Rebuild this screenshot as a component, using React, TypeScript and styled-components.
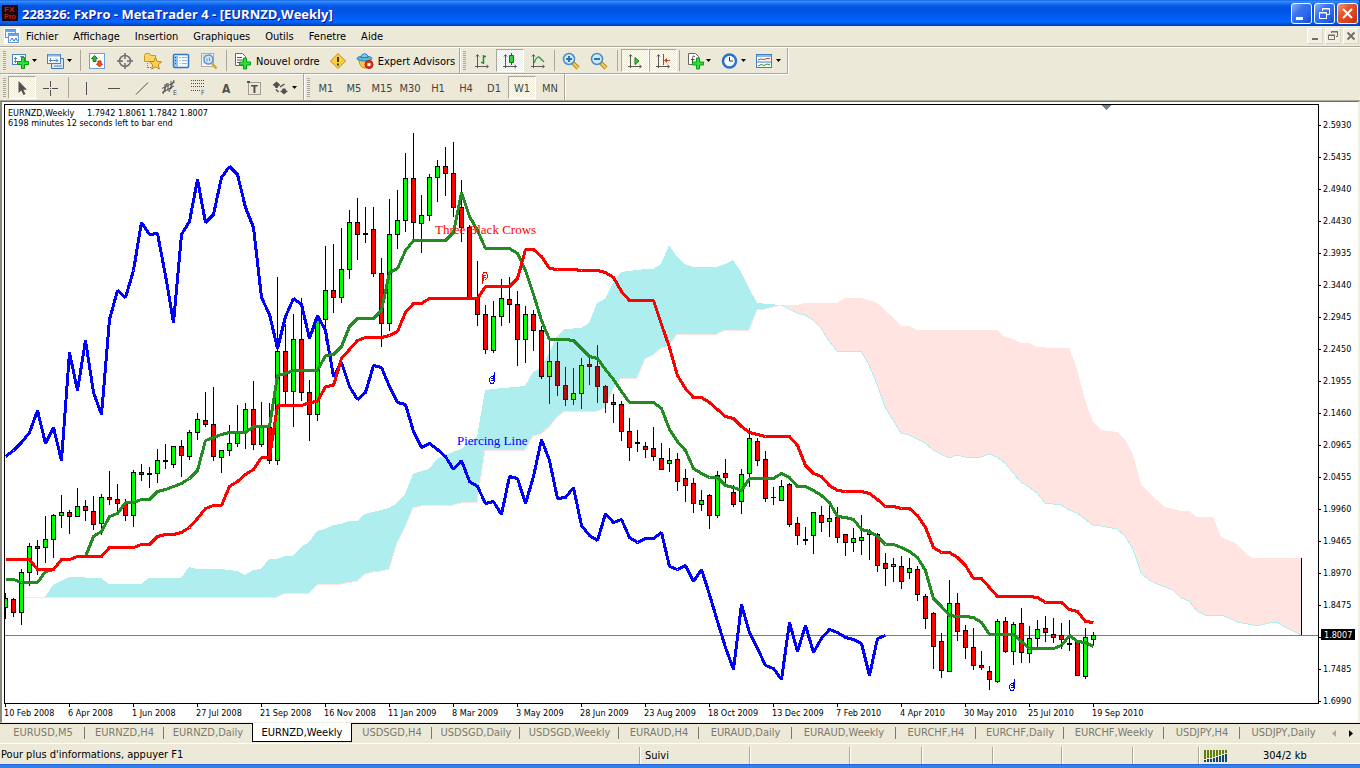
import React from "react";
import styled, { createGlobalStyle } from "styled-components";

const UI_FONT = '"DejaVu Sans Condensed", "Liberation Sans", Tahoma, sans-serif';

const GlobalStyle = createGlobalStyle`
  * { box-sizing: border-box; }
  body { margin: 0; background: #ece9d8; font-family: ${UI_FONT}; font-size: 11px; color: #000; }
  button, a { font-family: inherit; font-size: inherit; color: inherit; }
`;

const Window = styled.div`
  display: flex;
  flex-direction: column;
  min-height: 100vh;
  background: #ece9d8;
  overflow: hidden;
`;

/* ---------- title bar ---------- */

const TitleBar = styled.header`
  display: flex;
  align-items: center;
  height: 26px;
  padding: 0 1px 0 2px;
  background: linear-gradient(#0a50d8 0, #3a94ff 1px, #1f78f5 3px, #0557e5 6px, #0054e3 12px, #0360fb 19px, #0366ff 22px, #0150d8 24px, #003dab 26px);
  border-right: 1px solid #0831d9;
`;

const Title = styled.h1`
  flex: 1;
  margin: 0 0 0 4px;
  padding-top: 1px;
  font-family: "Open Sans", "Trebuchet MS", sans-serif;
  font-size: 13px;
  line-height: 20px;
  font-weight: bold;
  color: #fff;
  text-shadow: 1px 1px 0 #0f1089;
  white-space: nowrap;
`;

const CaptionButtons = styled.div`
  display: flex;
  gap: 2px;
`;

const CaptionButton = styled.button<{ $danger?: boolean }>`
  width: 21px;
  height: 21px;
  padding: 0;
  border: 1px solid #fff;
  border-radius: 3px;
  background: ${(p) =>
    p.$danger
      ? "linear-gradient(135deg, #f0a088 0, #e2552f 35%, #d8431c 70%, #b83210 100%)"
      : "linear-gradient(135deg, #90b0f8 0, #3c74f0 35%, #2460ea 75%, #1848c0 100%)"};
  svg { display: block; }
`;

/* ---------- menu ---------- */

const MenuBar = styled.nav`
  display: flex;
  align-items: center;
  height: 21px;
  padding: 0 1px 0 4px;
  border-bottom: 1px solid #aca899;
`;

const MenuItems = styled.div`
  display: flex;
  flex: 1;
  gap: 15px;
  margin-left: 6px;
  padding-top: 2px;
`;

const MenuItem = styled.button`
  padding: 0;
  border: 0;
  background: none;
  line-height: 16px;
`;

const MdiButton = styled.button`
  width: 16px;
  height: 16px;
  margin-left: 2px;
  padding: 0;
  border: 1px solid;
  border-color: #fff #d8d5c4 #d8d5c4 #fff;
  background: #f1efe4;
  svg { display: block; }
`;

/* ---------- toolbars ---------- */

const ToolRow = styled.div<{ $first?: boolean }>`
  display: flex;
  height: 27px;
  border-top: ${(p) => (p.$first ? "1px solid #fff" : "0")};
`;

const ToolGroup = styled.div<{ $last?: boolean }>`
  display: flex;
  align-items: center;
  padding-left: 3px;
  border-right: 1px solid #aca899;
  border-bottom: ${(p) => (p.$last ? "0" : "1px solid #aca899")};
  box-shadow: 1px 1px 0 #fff;
`;

const Grip = styled.span`
  width: 3px;
  height: 20px;
  margin-right: 2px;
  background: repeating-linear-gradient(#aca899 0 1px, #ece9d8 1px 2px);
`;

const ToolButton = styled.button<{ $pressed?: boolean }>`
  display: flex;
  align-items: center;
  justify-content: center;
  width: 28px;
  height: 23px;
  padding: 0;
  line-height: 23px;
  color: #444;
  background: ${(p) =>
    p.$pressed
      ? "conic-gradient(#fff 25%, #ece9d8 0 50%, #fff 0 75%, #ece9d8 0) 0 0 / 2px 2px"
      : "none"};
  background-clip: padding-box;
  border: 1px solid;
  border-color: ${(p) => (p.$pressed ? "#aca899 #fff #fff #aca899" : "transparent")};
  svg { display: block; flex: none; }
`;

const MenuToolButton = styled(ToolButton)`
  justify-content: space-between;
  width: 35px;
  padding: 0 5px 0 2px;
`;

const PeriodButton = styled(ToolButton)`
  padding-top: 2px;
`;

const LabelButton = styled.button`
  display: flex;
  align-items: center;
  gap: 4px;
  height: 23px;
  padding: 0 4px;
  border: 0;
  background: none;
  white-space: nowrap;
  svg { display: block; flex: none; }
  span { padding-top: 2px; }
`;

const Divider = styled.span<{ $w: number }>`
  display: flex;
  justify-content: center;
  width: ${(p) => p.$w}px;
  height: 21px;
  &::after { content: ""; width: 1px; height: 100%; background: #aca899; }
`;

/* ---------- chart ---------- */

const ChartFrame = styled.main`
  border-top: 1px solid #716f64;
  border-left: 2px solid #8d8a7c;
  border-right: 2px solid #f1efe2;
  border-bottom: 1px solid #f1efe2;
  box-shadow: 0 -1px 0 #aca899;
  background: #fff;
  svg { display: block; width: 100%; height: auto; }
`;

/* ---------- tabs ---------- */

const TabStrip = styled.nav`
  display: flex;
  align-items: flex-start;
  height: 20px;
  padding-left: 1px;
  border-top: 1px solid #000;
`;

const Tab = styled.a<{ $w: number; $active?: boolean; $bar?: boolean }>`
  position: relative;
  display: flex;
  justify-content: center;
  width: ${(p) => p.$w}px;
  height: ${(p) => (p.$active ? "19px" : "18px")};
  margin-top: ${(p) => (p.$active ? "-1px" : "0")};
  flex: none;
  line-height: ${(p) => (p.$active ? "19px" : "17px")};
  text-decoration: none;
  white-space: nowrap;
  color: ${(p) => (p.$active ? "#000" : "#7b796c")};
  background: ${(p) => (p.$active ? "#fff" : "none")};
  border: solid #000;
  border-width: ${(p) => (p.$active ? "0 1px 1px 1px" : "0")};
  &::after {
    content: "";
    display: ${(p) => (p.$bar ? "block" : "none")};
    position: absolute;
    right: 0;
    top: 3px;
    width: 1px;
    height: 12px;
    background: #7b796c;
  }
`;

const TabArrows = styled.div`
  display: flex;
  margin-left: auto;
  gap: 13px;
  padding: 6px 7px 0 0;
`;

const ArrowButton = styled.button`
  padding: 0;
  border: 0;
  background: none;
  svg { display: block; }
`;

/* ---------- status bar ---------- */

const StatusBar = styled.footer`
  display: flex;
  align-items: flex-end;
  height: 21px;
  border-top: 1px solid #fff;
`;

const StatusHint = styled.span`
  flex: 1;
  padding-left: 1px;
  line-height: 18px;
`;

const StatusPane = styled.span<{ $w: number }>`
  display: flex;
  align-items: center;
  width: ${(p) => p.$w}px;
  height: 17px;
  padding-left: 5px;
  border-left: 1px solid #aca899;
  box-shadow: inset 1px 0 0 #fff;
  svg { display: block; }
`;

const Traffic = styled.span`
  margin-left: 35px;
`;

const TaskbarEdge = styled.div`
  height: 4px;
  background: linear-gradient(#1d5fd0, #3a86ee 2px, #2f7be6);
`;

/* ---------- icons ---------- */

const Icon = ({ children, w = 18 }: { children: React.ReactNode; w?: number }) => (
  <svg width={w} height="18" viewBox={`0 0 ${w} 18`} aria-hidden="true" fill="none">
    {children}
  </svg>
);

const Caret = () => (
  <svg width="5" height="3" viewBox="0 0 5 3" aria-hidden="true">
    <path d="M0 0h5L2.500 3z" fill="#000" />
  </svg>
);

const Plus = ({ x, y }: { x: number; y: number }) => (
  <path
    d={`M${x + 4} ${y}h3v4h4v3h-4v4h-3v-4h-4v-3h4z`}
    fill="#2ee03a"
    stroke="#0b9a14"
  />
);

const NewChartIcon = () => (
  <Icon w={20}>
    <rect x="1.500" y="2.500" width="13" height="10" fill="#fff" stroke="#4a82bd" />
    <path d="M4.500 5v6M3 9.500h5M3 6.500h3M9 4.500h4" stroke="#5a86b4" />
    <Plus x={6.5} y={5.5} />
  </Icon>
);

const ProfilesIcon = () => (
  <Icon w={20}>
    <path d="M5.500 6.500v10h12v-10z" fill="#dceaf8" stroke="#3f76b3" />
    <rect x="1.500" y="2.500" width="13" height="9" fill="#f4f9ff" stroke="#4a82bd" />
    <path d="M2 3.500h12" stroke="#8cb6e4" strokeWidth="2" />
    <path d="M4.500 6v4M3 8.500h9M10 6.500l2 2-2 2M8 14h8" stroke="#5a86b4" />
  </Icon>
);

const MarketWatchIcon = () => (
  <Icon>
    <rect x="1.500" y="1.500" width="15" height="15" fill="#fff" stroke="#6aa2dc" />
    <path d="M6.500 3.500l3 3H8v3H5v-3H3.500z" fill="#37b537" stroke="#1b7f22" />
    <path d="M11.500 15l-3-3H10V9h3v3h1.500z" fill="#f0552b" stroke="#b52f10" />
  </Icon>
);

const TargetIcon = () => (
  <Icon>
    <circle cx="9" cy="9" r="5.500" stroke="#6d6d6d" strokeWidth="1.500" />
    <path d="M9 1v6M9 11v6M1 9h6M11 9h6" stroke="#6d6d6d" strokeWidth="1.500" />
  </Icon>
);

const NavigatorIcon = () => (
  <Icon w={20}>
    <path d="M1.500 3.500l1-2h4l1 2h5v6h-11z" fill="#fbd768" stroke="#c9962a" />
    <path d="M4.500 11v5M5 15.500h3" stroke="#777" strokeDasharray="1 1" />
    <path d="M12.500 5.500l1.800 4 4.200.4-3.200 2.900 1 4.200-3.800-2.200-3.800 2.200 1-4.200-3.200-2.900 4.200-.4z" fill="#fcd04a" stroke="#b98518" />
  </Icon>
);

const DataWindowIcon = () => (
  <Icon>
    <rect x="1.500" y="2.500" width="15" height="13" rx="1" fill="#f7fbff" stroke="#2f77c8" strokeWidth="1.500" />
    <path d="M2 4h4v11H2z" fill="#8cc0f0" />
    <path d="M3 5.500h1M3 8.500h1M3 11.500h1" stroke="#1b4f8f" />
    <path d="M7.500 5.500h1" stroke="#e22" />
    <path d="M10 5.500h5M10 8.500h5M10 11.500h5M7.500 8.500h1M7.500 11.500h1" stroke="#9db4cc" />
  </Icon>
);

const TesterIcon = () => (
  <Icon>
    <rect x="1.500" y="1.500" width="12" height="13" fill="#fafafa" stroke="#b0aea2" />
    <path d="M3 3h3v3H3zM9 3h3M3 11h2" stroke="#b8c0c8" />
    <circle cx="8.500" cy="7.500" r="4.500" fill="#cfe6fa" stroke="#5c92c8" strokeWidth="1.500" />
    <path d="M7 9.500v-3M9.500 9V5.500" stroke="#5c92c8" />
    <path d="M12 11.500l4.500 5" stroke="#d7a42c" strokeWidth="2.500" />
  </Icon>
);

const NewOrderIcon = () => (
  <Icon w={18}>
    <path d="M1.500 1.500h7l3 3v9h-10z" fill="#fff" stroke="#666" />
    <path d="M3 5.500h5M3 8h6M3 10.500h3" stroke="#555" />
    <Plus x={5.5} y={6} />
  </Icon>
);

const MetaEditorIcon = () => (
  <Icon>
    <path d="M9 1.500L16.500 9 9 16.500 1.500 9z" fill="#f9cf3d" stroke="#c08b14" />
    <path d="M9 5v5M9 11.500v2" stroke="#4a3a08" strokeWidth="2" />
  </Icon>
);

const ExpertIcon = () => (
  <Icon>
    <path d="M3 8c0 5 3 8 6 8s6-3 6-8z" fill="#f6c84a" stroke="#c08b14" />
    <ellipse cx="8.500" cy="6.500" rx="7.500" ry="2.500" fill="#5ab4dc" stroke="#2880b0" />
    <path d="M5 5.500c0-5 7-5 7 0z" fill="#7cc8ea" stroke="#2880b0" />
    <circle cx="13" cy="12.500" r="4" fill="#e0341a" stroke="#a81c0a" />
    <path d="M11.500 11h3v3h-3z" fill="#fff" />
  </Icon>
);

const Axes = () => (
  <path d="M4.500 3v13M2 14.500h13M3 4.500l1.500-2 1.500 2M13.500 13l2 1.500-2 1.500" stroke="#5a5a5a" />
);

const BarsIcon = () => (
  <Icon><Axes /><path d="M10.500 3v9M10.500 4.500H13M8 10.500h2.500" stroke="#16941c" strokeWidth="1.500" /></Icon>
);
const CandlesIcon = () => (
  <Icon><Axes /><path d="M10.500 1v12" stroke="#0a7a10" /><path d="M8.500 3.500h4v7h-4z" fill="#2ed53a" stroke="#0a7a10" /></Icon>
);
const LineIcon = () => (
  <Icon><Axes /><path d="M5 11c2-6 5-7 6-5l4 4" stroke="#3c9c44" strokeWidth="1.500" /></Icon>
);

const ZoomIcon = ({ plus }: { plus?: boolean }) => (
  <Icon>
    <path d="M11 11l5 5" stroke="#9a7414" strokeWidth="4" />
    <path d="M11 11l5 5" stroke="#f0cc4c" strokeWidth="2.500" />
    <circle cx="7" cy="7" r="5.500" fill="#cdeafa" stroke="#4a8cc4" strokeWidth="1.500" />
    <path d={plus ? "M4 7h6M7 4v6" : "M4 7h6"} stroke="#2a74b0" strokeWidth="2" />
  </Icon>
);

const AutoScrollIcon = () => (
  <Icon><Axes /><path d="M9 5.500l4 3.500-4 3.500z" fill="#2ed53a" stroke="#0a7a10" /></Icon>
);
const ShiftIcon = () => (
  <Icon><Axes /><path d="M9.500 2v11" stroke="#2a68b8" /><path d="M10 8.500L13 6v2h3v1h-3v2z" fill="#c8401c" /></Icon>
);

const IndicatorsIcon = () => (
  <Icon w={20}>
    <path d="M3.500 1.500h7l3 3v8h-10z" fill="#fff" stroke="#666" />
    <path d="M10 4.500c-2-1-2.500 0-2.500 2v5M6 7.500h3.500" stroke="#444" />
    <Plus x={7.5} y={6} />
  </Icon>
);
const ClockIcon = () => (
  <Icon>
    <circle cx="9.500" cy="9" r="6.500" fill="#f2f9ff" stroke="#2b72c6" strokeWidth="2.500" />
    <path d="M9.500 5v4H13" stroke="#333" />
  </Icon>
);
const TemplatesIcon = () => (
  <Icon>
    <rect x="1.500" y="2.500" width="15" height="13" fill="#fff" stroke="#3f7fc4" />
    <path d="M2 4h14" stroke="#8cbcec" strokeWidth="2" />
    <path d="M2 10h14" stroke="#3f7fc4" />
    <path d="M3 8l3-1 3 .5L12 6.500h3" stroke="#b0442a" />
    <path d="M3 14l3-1.500 3 1 3-1.500 3 1" stroke="#2c9434" />
  </Icon>
);

const G = "#505050";
const IconLetter = ({ x, y, size, children }: { x: number; y: number; size: number; children: string }) => (
  <text x={x} y={y} fontSize={size} fontWeight={size > 8 ? "bold" : "normal"} fill={G}>{children}</text>
);
const PointerIcon = () => (
  <Icon><path d="M5.500 2v12l2.800-2.500L10.500 16l2-1-2.200-4.200h3.700z" fill={G} /></Icon>
);
const CrosshairIcon = () => (
  <Icon><path d="M9.500 2v6M9.500 11v6M2 9.500h6M11 9.500h6M9 9.500h1" stroke={G} /></Icon>
);
const VLineIcon = () => <Icon><path d="M9.500 3v13" stroke={G} /></Icon>;
const HLineIcon = () => <Icon><path d="M3 9.500h12" stroke={G} /></Icon>;
const TrendIcon = () => <Icon><path d="M3 15.500L15 3.500" stroke={G} /></Icon>;
const ChannelIcon = () => (
  <Icon w={20}>
    <path d="M2 9.500L15 3M2 13.500L14 7M5 5v8M8 4v8M11 2v8M3 15l4-11M9 13l5-12" stroke={G} />
    <IconLetter x={13} y={16} size={7}>E</IconLetter>
  </Icon>
);
const FiboIcon = () => (
  <Icon w={20}>
    <path d="M3 1.500h13M3 4.500h13M3 7.500h13M3 11.500h9" stroke={G} strokeDasharray="1 1" />
    <IconLetter x={13} y={16} size={7}>F</IconLetter>
  </Icon>
);
const TextIcon = () => (
  <Icon><IconLetter x={5} y={14} size={12}>A</IconLetter></Icon>
);
const LabelIcon = () => (
  <Icon>
    <path d="M3.500 3.500h12v12h-12z" stroke={G} strokeDasharray="1 1" />
    <IconLetter x={6} y={14} size={11}>T</IconLetter>
    <path d="M2 2h3v2H2z" fill={G} />
  </Icon>
);
const ArrowsIcon = () => (
  <Icon>
    <path d="M5.500 2.500l4 3.500-2 1-1 2h-2l-1-2-2-1zM13 15.500L9 12l2-.5.5-2h3l.5 2 2 .5z" fill={G} />
    <path d="M5 10.500l2.500 2.500M9 8l4.500-3" stroke={G} strokeWidth="1.500" />
  </Icon>
);

/* ---------- chart data (y in chart units, one entry per weekly bar) ---------- */

const X0 = 5;
const STEP = 8;
const barX = (i: number) => X0 + STEP * i;

type Row = [number, number, number, number, ("r" | "g" | "d")];
const candles: Row[] = [
  [593,598,607,618,"g"],[598,599,612,616,"r"],[569,572,612,624,"g"],[543,546,572,585,"g"],[540,546,548,574,"r"],
  [516,539,547,562,"g"],[514,515,539,557,"g"],[495,512,515,527,"g"],[510,512,516,533,"r"],[488,506,516,516,"g"],
  [500,506,510,520,"r"],[496,511,524,529,"r"],[494,497,523,534,"g"],[471,497,499,504,"r"],[484,499,503,511,"r"],
  [499,503,515,520,"r"],[470,472,515,526,"g"],[464,472,474,480,"r"],[467,473,474,487,"d"],[449,460,473,482,"g"],
  [444,460,461,468,"d"],[446,446,464,467,"g"],[440,446,455,476,"r"],[430,432,456,459,"g"],[413,419,432,439,"g"],
  [392,420,424,426,"r"],[387,424,456,460,"r"],[450,450,457,472,"g"],[425,443,450,455,"g"],[405,432,443,446,"g"],
  [403,409,432,448,"g"],[381,409,444,449,"r"],[402,427,444,446,"g"],[403,427,460,463,"r"],[277,351,460,464,"g"],
  [324,351,391,404,"r"],[314,339,391,426,"g"],[298,339,392,400,"r"],[380,392,414,440,"r"],[318,320,414,420,"g"],
  [246,290,319,340,"g"],[244,290,297,312,"r"],[228,269,297,302,"g"],[210,222,269,278,"g"],[198,222,234,259,"r"],
  [207,233,234,242,"d"],[207,229,273,276,"r"],[258,273,323,346,"r"],[199,234,323,330,"g"],[190,220,234,248,"g"],
  [153,178,220,231,"g"],[133,178,222,239,"r"],[195,215,223,252,"g"],[174,177,215,220,"g"],[160,166,177,201,"g"],
  [147,166,173,195,"r"],[142,173,207,216,"r"],[180,207,227,241,"r"],[225,227,298,298,"r"],[261,298,314,325,"r"],
  [305,314,349,353,"r"],[301,316,350,352,"g"],[279,298,316,325,"g"],[277,299,304,322,"r"],[291,304,339,365,"r"],
  [306,314,339,362,"g"],[310,314,330,350,"r"],[326,330,376,378,"r"],[340,361,376,403,"g"],[342,361,385,395,"r"],
  [367,385,399,405,"r"],[368,393,399,404,"g"],[358,365,393,408,"g"],[357,364,366,384,"r"],[345,366,386,402,"r"],
  [385,386,402,412,"r"],[394,402,404,422,"r"],[401,404,431,440,"r"],[418,431,447,460,"r"],[430,442,443,451,"d"],
  [442,446,449,457,"r"],[427,448,456,460,"r"],[443,458,469,469,"r"],[448,460,463,471,"g"],[453,459,481,490,"r"],
  [469,478,485,501,"r"],[478,483,503,512,"r"],[490,500,504,510,"g"],[494,495,515,528,"r"],[471,475,515,517,"g"],
  [459,473,477,483,"r"],[485,492,504,506,"r"],[469,474,501,513,"g"],[428,438,473,486,"g"],[438,441,460,465,"r"],
  [451,459,498,501,"r"],[487,497,497,504,"d"],[480,486,500,500,"g"],[483,484,524,526,"r"],[517,523,535,544,"r"],
  [527,539,540,544,"d"],[512,512,535,553,"g"],[506,515,522,531,"r"],[502,518,521,536,"g"],[507,517,537,542,"r"],
  [534,534,542,555,"r"],[528,538,542,551,"g"],[515,537,540,554,"g"],[529,532,534,559,"g"],[533,534,565,571,"r"],
  [553,563,568,585,"r"],[558,564,566,581,"g"],[556,566,581,588,"r"],[558,568,572,578,"g"],[566,569,594,600,"r"],
  [594,596,618,628,"r"],[612,613,646,668,"r"],[633,641,670,677,"r"],[580,603,671,671,"g"],[593,603,631,640,"r"],
  [625,630,647,658,"r"],[628,647,665,669,"r"],[651,665,667,669,"r"],[666,671,679,689,"r"],[619,621,681,682,"g"],
  [617,621,651,652,"r"],[622,624,651,664,"g"],[608,623,652,662,"r"],[626,638,653,662,"g"],[620,629,638,647,"g"],
  [616,628,632,641,"r"],[618,634,637,642,"r"],[623,635,639,648,"r"],[620,643,644,650,"d"],[641,642,675,675,"r"],
  [628,637,676,678,"g"],[632,635,639,645,"g"],
];

const chikou = [
  456,450,442,432,410,443,427,460,352,390,340,392,414,319,290,297,270,222,234,233,275,322,234,221,179,222,214,177,166,174,
  207,227,297,314,348,316,298,304,338,315,330,376,362,386,399,392,365,367,386,402,404,431,447,443,449,456,469,460,481,486,
  503,501,514,476,478,503,476,439,460,498,497,487,525,535,540,513,522,519,537,542,538,538,532,566,569,565,581,569,594,621,
  647,669,604,632,648,665,668,679,622,651,625,652,638,629,632,637,639,643,675,638,635,
];

const tenkan = [
  579,579,582,582,582,571,569,559,559,556,556,536,531,516,513,502,502,499,499,491,489,486,483,478,470,440,437,434,432,432,
  432,426,426,426,375,373,370,370,370,370,355,354,346,326,318,318,318,310,272,268,250,240,240,240,240,240,232,192,216,230,
  248,248,248,248,253,270,294,320,339,339,339,340,348,356,358,369,379,391,402,402,402,402,408,429,441,450,468,473,477,477,
  485,487,490,478,478,478,478,473,477,486,486,490,495,502,516,517,519,529,531,536,544,544,547,551,557,570,598,606,615,616,
  616,617,622,634,634,634,634,641,648,648,648,648,645,635,641,642,646,
];

const kijun = [
  559,559,559,559,569,569,569,559,559,556,556,556,556,547,547,547,547,544,544,536,534,534,532,527,518,508,505,505,486,481,
  474,469,457,457,405,405,405,405,402,401,386,385,358,349,340,337,337,337,335,331,312,303,303,298,298,298,298,298,298,298,
  286,286,286,286,278,249,249,256,268,269,269,269,270,270,270,272,277,291,300,300,300,300,324,347,375,388,397,397,402,409,
  416,418,426,432,434,436,436,436,436,445,465,473,476,485,490,491,491,491,493,499,506,506,508,508,515,527,547,552,552,557,
  565,578,578,587,596,596,596,596,596,597,602,602,602,609,611,621,622,
];

type Pt = [number, number];
const bullTop: Pt[] = [
  [45,597],[53,585],[61,581],[69,577],[101,578],[109,584],[141,584],[149,578],[181,578],[189,567],[197,569],[221,569],
  [237,571],[245,575],[253,570],[261,569],[269,559],[277,559],[285,556],[293,556],[301,547],[309,542],[317,531],[325,529],
  [333,525],[341,524],[349,521],[357,521],[365,514],[373,512],[381,510],[389,508],[397,503],[405,494],[413,474],[421,471],
  [429,469],[437,459],[445,455],[453,452],[461,449],[469,442],[477,437],[485,390],[493,389],[525,386],[533,372],[541,368],
  [549,353],[557,336],[565,329],[581,328],[589,323],[597,303],[605,299],[613,283],[621,272],[645,269],[653,269],[661,264],
  [669,245],[677,257],[685,264],[693,267],[717,267],[725,264],[733,260],[741,272],[749,288],[757,303],[769,304],[781,305],
];
const bullBottom: Pt[] = [
  [45,597],[277,597],[285,593],[309,593],[317,585],[341,584],[357,581],[365,574],[373,572],[381,571],[389,569],[397,543],
  [405,527],[413,508],[421,506],[453,505],[461,503],[477,502],[485,450],[525,450],[533,436],[541,434],[549,427],[557,417],
  [565,411],[597,411],[605,408],[613,389],[621,378],[637,378],[645,359],[653,355],[661,348],[669,346],[677,334],[717,334],
  [725,330],[749,330],[757,310],[765,309],[773,307],[781,305],
];
const bearTop: Pt[] = [
  [781,305],[797,305],[805,303],[837,303],[845,298],[861,298],[869,300],[877,303],[885,311],[893,317],[901,326],[909,326],
  [917,330],[997,330],[1005,337],[1013,339],[1021,343],[1029,343],[1037,347],[1053,348],[1069,348],[1077,369],[1085,400],
  [1093,422],[1101,430],[1117,432],[1125,439],[1133,455],[1141,484],[1149,493],[1157,500],[1165,507],[1181,511],[1189,511],
  [1197,517],[1213,517],[1221,537],[1237,544],[1245,553],[1253,558],[1301,558],
];
const bearBottom: Pt[] = [
  [781,305],[789,309],[797,313],[805,315],[813,320],[821,328],[829,341],[837,351],[861,351],[869,365],[877,384],[885,407],
  [893,420],[901,433],[909,435],[925,443],[933,450],[949,458],[957,455],[965,457],[981,457],[989,454],[997,457],[1005,463],
  [1013,473],[1021,482],[1029,487],[1037,493],[1045,503],[1061,505],[1069,510],[1077,513],[1085,519],[1093,525],[1101,526],
  [1117,529],[1125,536],[1133,549],[1141,573],[1149,580],[1157,584],[1173,590],[1181,598],[1189,601],[1197,611],[1205,615],
  [1221,615],[1229,618],[1237,622],[1253,625],[1261,625],[1269,623],[1277,622],[1285,627],[1301,635],
];

const prices = [
  "2.5930","2.5435","2.4940","2.4430","2.3935","2.3440","2.2945","2.2450","2.1955","2.1460","2.0965","2.0455","1.9960",
  "1.9465","1.8970","1.8475","","1.7485","1.6990",
];
const dates = [
  "10 Feb 2008","6 Apr 2008","1 Jun 2008","27 Jul 2008","21 Sep 2008","16 Nov 2008","11 Jan 2009","8 Mar 2009","3 May 2009",
  "28 Jun 2009","23 Aug 2009","18 Oct 2009","13 Dec 2009","7 Feb 2010","4 Apr 2010","30 May 2010","25 Jul 2010","19 Sep 2010",
];

const series = (ys: number[]) => ys.map((y, i) => `${barX(i) + 0.5},${y + 0.5}`).join(" ");
const pts = (a: Pt[]) => a.map(([x, y]) => `${x},${y}`).join(" ");
const area = (top: Pt[], bottom: Pt[]) => `${pts(top)} ${pts([...bottom].reverse())}`;

/* bars that the cloud tints */
const inCloud = (i: number) => i >= 68 && i <= 75;

const Candle = ({ i, row }: { i: number; row: Row }) => {
  const [high, top, bottom, low, kind] = row;
  const x = barX(i);
  const tinted = inCloud(i);
  const edge = tinted ? "#501010" : "#000";
  const fill = kind === "g" ? (tinted ? "#50f010" : "#00ff00") : tinted ? "#af1111" : "#ff0000";
  return (
    <g>
      <rect x={x} y={high} width="1" height={low - high + 1} fill={edge} />
      <rect x={x - 2} y={top} width="5" height={bottom - top + 1} fill={edge} />
      {kind !== "d" && <rect x={x - 1} y={top + 1} width="3" height={Math.max(1, bottom - top - 1)} fill={fill} />}
    </g>
  );
};

const Hand = ({ x, y, color, down }: { x: number; y: number; color: string; down?: boolean }) => (
  <g transform={`translate(${x} ${y})${down ? " rotate(180 3 6)" : ""}`} fill="none" stroke={color}>
    <path d="M5.500 0v9" />
    <path d="M4.500 3v5M3.500 4.500h-1l-2 2v3l1.500 2h2l1.500-2v-3M2 6.500h2M2 8.500h3" />
  </g>
);

const Chart = () => (
  <svg viewBox="2 102 1356 620" role="img" aria-label="EURNZD weekly chart" fontFamily={UI_FONT} fontSize="9">
    <g shapeRendering="crispEdges">
      <rect x="5" y="597" width="272" height="1" fill="#ffe4e1" />
      <polygon points={area(bullTop, bullBottom)} fill="#afeeee" />
      <polyline points={pts(bullBottom)} fill="none" stroke="#ffe4e1" />
      <polygon points={area(bearTop, bearBottom)} fill="#ffe4e1" />
      <polyline points={pts(bearBottom)} fill="none" stroke="#afeeee" />
      <rect x="1301" y="558" width="1" height="78" fill="#000" />
      <rect x="5" y="635" width="1313" height="1" fill="#708090" />
      <clipPath id="plot"><rect x="5" y="105" width="1313" height="598" /></clipPath>
      <g clipPath="url(#plot)">
        {candles.map((row, i) => <Candle key={i} i={i} row={row} />)}
        <polyline points={series(chikou)} fill="none" stroke="#0000ff" strokeWidth="3" strokeLinejoin="bevel" />
        <polyline points={series(tenkan)} fill="none" stroke="#228b22" strokeWidth="3" strokeLinejoin="bevel" />
        <polyline points={series(kijun)} fill="none" stroke="#ff0000" strokeWidth="3" strokeLinejoin="bevel" />
      </g>
      <path d="M4 104h1315v600H4zM5 105v598h1313V105z" fillRule="evenodd" fill="#000" />
      <path d="M1102 105h9l-4.500 5z" fill="#708090" />
      <Hand x={482} y={272} color="#ff0000" down />
      <Hand x={489} y={372} color="#0000ff" />
      <Hand x={1009} y={679} color="#0000ff" />
      {prices.map((_, i) => <rect key={i} x="1319" y={125 + 32 * i} width="2" height="1" />)}
      {dates.map((_, i) => <rect key={i} x={5 + 64 * i} y="704" width="1" height="3" />)}
      <rect x="1321" y="629" width="34" height="11" />
    </g>
    {prices.map((p, i) => p && <text key={p} x="1323" y={128 + 32 * i}>{p}</text>)}
    {dates.map((d, i) => <text key={d} x={4 + 64 * i} y="716">{d}</text>)}
    <text x="1324" y="638" fill="#fff">1.8007</text>
    <text x="8" y="116">EURNZD,Weekly</text>
    <text x="87" y="116">1.7942 1.8061 1.7842 1.8007</text>
    <text x="8" y="126">6198 minutes 12 seconds left to bar end</text>
    <g fontFamily='"Liberation Serif", "Times New Roman", serif' fontSize="13">
      <text x="435" y="234" fill="#ff0000">Three Black Crows</text>
      <text x="457" y="445" fill="#0000ff">Piercing Line</text>
    </g>
  </svg>
);

/* ---------- page ---------- */

const menus = ["Fichier", "Affichage", "Insertion", "Graphiques", "Outils", "Fenetre", "Aide"];
const periods = ["M1", "M5", "M15", "M30", "H1", "H4", "D1", "W1", "MN"];
const tabs: [string, number][] = [
  ["EURUSD,M5", 84],["EURNZD,H4", 79],["EURNZD,Daily", 88],["EURNZD,Weekly", 100],["USDSGD,H4", 80],["USDSGD,Daily", 88],
  ["USDSGD,Weekly", 99],["EURAUD,H4", 80],["EURAUD,Daily", 93],["EURAUD,Weekly", 104],["EURCHF,H4", 80],["EURCHF,Daily", 88],
  ["EURCHF,Weekly", 100],["USDJPY,H4", 76],["USDJPY,Daily", 87],
];

export default function App() {
  return (
    <Window>
      <GlobalStyle />
      <TitleBar>
        <svg width="16" height="16" viewBox="0 0 16 16" aria-hidden="true">
          <rect width="16" height="16" fill="#1c0608" />
          <g fill="#d01818" fontFamily="Liberation Sans, sans-serif" fontWeight="bold">
            <text x="2" y="7" fontSize="8">FX</text>
            <text x="2" y="14" fontSize="7">Pro</text>
          </g>
        </svg>
        <Title>228326: FxPro - MetaTrader 4 - [EURNZD,Weekly]</Title>
        <CaptionButtons>
          <CaptionButton aria-label="Minimize">
            <svg width="19" height="19" viewBox="0 0 19 19"><path d="M4 13h7v3H4z" fill="#fff" /></svg>
          </CaptionButton>
          <CaptionButton aria-label="Restore">
            <svg width="19" height="19" viewBox="0 0 19 19" fill="none" stroke="#fff">
              <path d="M7.500 7V4.500h7v6H12" /><path d="M7 5h8" /><path d="M4.500 8.500h7v6h-7zM4 9h8" />
            </svg>
          </CaptionButton>
          <CaptionButton $danger aria-label="Close">
            <svg width="19" height="19" viewBox="0 0 19 19"><path d="M5 5l9 9M14 5l-9 9" stroke="#fff" strokeWidth="2" /></svg>
          </CaptionButton>
        </CaptionButtons>
      </TitleBar>

      <MenuBar>
        <svg width="16" height="16" viewBox="0 0 16 16" fill="none" aria-hidden="true">
          <rect width="16" height="16" fill="#fff" />
          <rect x="1.500" y="1.500" width="10" height="8" fill="#eef6ff" stroke="#5a96d8" />
          <rect x="4.500" y="5.500" width="10" height="9" fill="#fff" stroke="#5a96d8" />
          <path d="M1 3h11M4 7h11" stroke="#6aa6e6" strokeWidth="2" />
          <path d="M6 13l2-3 2 3 2-3 1.500 3" stroke="#3a70b0" />
        </svg>
        <MenuItems>
          {menus.map((m) => <MenuItem key={m}>{m}</MenuItem>)}
        </MenuItems>
        <MdiButton aria-label="Minimize chart">
          <svg width="14" height="14" viewBox="0 0 14 14"><path d="M4 9h6v2H4z" fill="#716f64" /></svg>
        </MdiButton>
        <MdiButton aria-label="Restore chart">
          <svg width="14" height="14" viewBox="0 0 14 14" fill="none" stroke="#716f64">
            <path d="M5.500 4V2.500h6v5H10M5 3h7M2.500 6.500h6v4h-6zM2 6h7" />
          </svg>
        </MdiButton>
        <MdiButton aria-label="Close chart">
          <svg width="14" height="14" viewBox="0 0 14 14"><path d="M3.500 3.500l7 7M10.500 3.500l-7 7" stroke="#716f64" strokeWidth="2" /></svg>
        </MdiButton>
      </MenuBar>

      <ToolRow $first>
        <ToolGroup>
          <Grip />
          <MenuToolButton aria-label="New chart"><NewChartIcon /><Caret /></MenuToolButton>
          <MenuToolButton aria-label="Profiles"><ProfilesIcon /><Caret /></MenuToolButton>
          <Divider $w={5} />
          <ToolButton aria-label="Market watch"><MarketWatchIcon /></ToolButton>
          <ToolButton aria-label="Crosshair data"><TargetIcon /></ToolButton>
          <ToolButton aria-label="Navigator"><NavigatorIcon /></ToolButton>
          <ToolButton aria-label="Data window"><DataWindowIcon /></ToolButton>
          <ToolButton aria-label="Strategy tester"><TesterIcon /></ToolButton>
          <Divider $w={7} />
          <LabelButton><NewOrderIcon /><span>Nouvel ordre</span></LabelButton>
          <ToolButton aria-label="MetaEditor"><MetaEditorIcon /></ToolButton>
          <LabelButton><ExpertIcon /><span>Expert Advisors</span></LabelButton>
        </ToolGroup>
        <ToolGroup>
          <Grip />
          <ToolButton aria-label="Bar chart"><BarsIcon /></ToolButton>
          <ToolButton $pressed aria-label="Candlesticks"><CandlesIcon /></ToolButton>
          <ToolButton aria-label="Line chart"><LineIcon /></ToolButton>
          <Divider $w={5} />
          <ToolButton aria-label="Zoom in"><ZoomIcon plus /></ToolButton>
          <ToolButton aria-label="Zoom out"><ZoomIcon /></ToolButton>
          <Divider $w={8} />
          <ToolButton $pressed aria-label="Auto scroll"><AutoScrollIcon /></ToolButton>
          <ToolButton $pressed aria-label="Chart shift"><ShiftIcon /></ToolButton>
          <Divider $w={5} />
          <MenuToolButton aria-label="Indicators"><IndicatorsIcon /><Caret /></MenuToolButton>
          <MenuToolButton aria-label="Periods"><ClockIcon /><Caret /></MenuToolButton>
          <MenuToolButton aria-label="Templates"><TemplatesIcon /><Caret /></MenuToolButton>
        </ToolGroup>
      </ToolRow>

      <ToolRow>
        <ToolGroup $last>
          <Grip />
          <ToolButton $pressed aria-label="Pointer"><PointerIcon /></ToolButton>
          <ToolButton aria-label="Crosshair"><CrosshairIcon /></ToolButton>
          <Divider $w={8} />
          <ToolButton aria-label="Vertical line"><VLineIcon /></ToolButton>
          <ToolButton aria-label="Horizontal line"><HLineIcon /></ToolButton>
          <ToolButton aria-label="Trend line"><TrendIcon /></ToolButton>
          <ToolButton aria-label="Channel"><ChannelIcon /></ToolButton>
          <ToolButton aria-label="Fibonacci"><FiboIcon /></ToolButton>
          <ToolButton aria-label="Text"><TextIcon /></ToolButton>
          <ToolButton aria-label="Text label"><LabelIcon /></ToolButton>
          <MenuToolButton aria-label="Arrows"><ArrowsIcon /><Caret /></MenuToolButton>
        </ToolGroup>
        <ToolGroup $last>
          <Grip />
          {periods.map((p) => <PeriodButton key={p} $pressed={p === "W1"}>{p}</PeriodButton>)}
        </ToolGroup>
      </ToolRow>

      <ChartFrame><Chart /></ChartFrame>

      <TabStrip>
        {tabs.map(([name, w], i) => (
          <Tab key={name} href="#" $w={w} $active={i === 3} $bar={i !== 2 && i !== 3 && i !== tabs.length - 1}>{name}</Tab>
        ))}
        <TabArrows>
          <ArrowButton aria-label="Previous tabs"><svg width="4" height="7" viewBox="0 0 4 7"><path d="M4 0v7L0 3.500z" fill="#aca899" /></svg></ArrowButton>
          <ArrowButton aria-label="Next tabs"><svg width="4" height="7" viewBox="0 0 4 7"><path d="M0 0v7l4-3.500z" fill="#000" /></svg></ArrowButton>
        </TabArrows>
      </TabStrip>

      <StatusBar>
        <StatusHint>Pour plus d'informations, appuyer F1</StatusHint>
        <StatusPane $w={110}>Suivi</StatusPane>
        <StatusPane $w={100} />
        <StatusPane $w={72} />
        <StatusPane $w={71} />
        <StatusPane $w={69} />
        <StatusPane $w={71} />
        <StatusPane $w={66} />
        <StatusPane $w={162}>
          <svg width="24" height="12" viewBox="0 0 24 12" shapeRendering="crispEdges" aria-hidden="true">
            {[10, 9, 9, 8, 7, 6, 5, 4].map((top, i) => (
              <g key={i}>
                <rect x={i * 3} y="0" width="2" height={top - 1} fill="#5f7f00" />
                <rect x={i * 3} y={top} width="2" height={12 - top} fill="#0c4a6c" />
              </g>
            ))}
          </svg>
          <Traffic>304/2 kb</Traffic>
        </StatusPane>
      </StatusBar>
      <TaskbarEdge />
    </Window>
  );
}
